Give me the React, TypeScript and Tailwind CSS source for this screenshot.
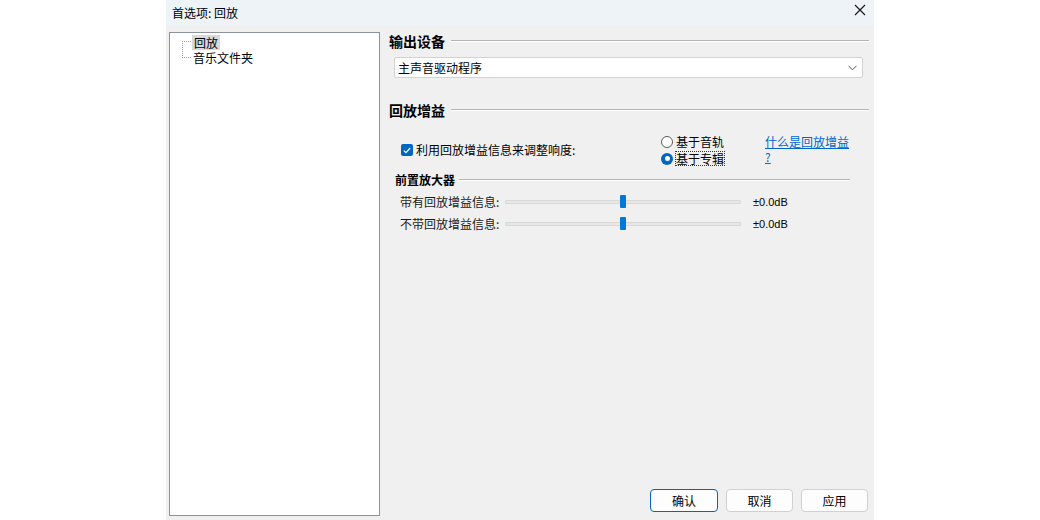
import React from "react";

// ─── Preferences dialog: playback page ───────────────────

const font = { fontFamily: '"Noto Sans CJK SC", "Noto Sans", sans-serif' };

function SectionHeader({ title, className = "" }: { title: string; className?: string }) {
    return (
        <div className={`flex h-[20px] items-center ${className}`}>
            <span className="text-[14px] font-bold leading-none text-black">{title}</span>
            <div className="ml-[6px] flex-1 border-t border-b border-t-[#b4b4b4] border-b-white" />
        </div>
    );
}

function Slider({ label }: { label: string }) {
    return (
        <div className="flex h-[20px] items-center pl-[11px]">
            <span className="w-[105px] text-[12px] leading-none text-[#1a1a1a]">{label}</span>
            <div className="relative flex h-[14px] w-[236px] items-center">
                <div className="h-[4px] w-full rounded-[1px] border border-[#d8d8d8] bg-[#e7e7e7]" />
                <div className="absolute left-[115px] top-0 h-[13px] w-[6px] rounded-[1px] bg-[#0078d7]" />
            </div>
            <span className="ml-[12px] text-[11px] leading-none text-black" style={{ fontFamily: '"Liberation Sans", sans-serif' }}>
                ±0.0dB
            </span>
        </div>
    );
}

function Radio({ checked }: { checked?: boolean }) {
    return checked ? (
        <span className="flex h-[12px] w-[12px] items-center justify-center rounded-full bg-[#0067c0]">
            <span className="h-[5px] w-[5px] rounded-full bg-white" />
        </span>
    ) : (
        <span className="h-[12px] w-[12px] rounded-full border border-[#5a5a5a] bg-white" />
    );
}

export default function App() {
    return (
        <div className="flex h-[520px] w-[1040px] bg-white" style={font}>
            <div className="ml-[166px] flex h-full w-[708px] flex-col bg-[#f0f0f0]">
                {/* Title bar */}
                <div className="flex h-[25px] items-center justify-between bg-[#eef3f8] pl-[6px] pr-[8px]">
                    <span className="text-[12px] leading-none text-black">首选项: 回放</span>
                    <svg width="12" height="12" viewBox="0 0 12 12" className="mt-[-6px]">
                        <path d="M1 1 L11 11 M11 1 L1 11" stroke="#1a1a1a" strokeWidth="1.2" />
                    </svg>
                </div>

                <div className="flex flex-1">
                    {/* Tree */}
                    <div className="ml-[3px] mt-[7px] h-[484px] w-[211px] border border-[#8d939b] bg-white">
                        <div className="relative pl-[22px] pt-[2px]">
                            <div className="absolute left-[12px] top-[8px] h-[17px] border-l border-dotted border-[#a0a0a0]" />
                            <div className="absolute left-[12px] top-[8px] w-[9px] border-t border-dotted border-[#a0a0a0]" />
                            <div className="absolute left-[12px] top-[24px] w-[9px] border-t border-dotted border-[#a0a0a0]" />
                            <div className="flex h-[15px] items-center">
                                <span className="bg-[#d9d9d9] px-[2px] text-[12px] leading-[15px] text-black">回放</span>
                            </div>
                            <div className="flex h-[16px] items-center pl-[1px] text-[12px] leading-none text-black">音乐文件夹</div>
                        </div>
                    </div>

                    {/* Right pane */}
                    <div className="ml-[9px] flex w-[480px] flex-col pb-[8px]">
                        <SectionHeader title="输出设备" className="mt-[6px]" />
                        <div className="ml-[5px] mt-[6px] flex h-[21px] w-[469px] items-center justify-between rounded-[2px] border border-[#d2d2d2] bg-white pl-[3px] pr-[5px]">
                            <span className="text-[12px] leading-none text-black">主声音驱动程序</span>
                            <svg width="9" height="6" viewBox="0 0 9 6">
                                <path d="M0.5 0.8 L4.5 4.8 L8.5 0.8" stroke="#555" strokeWidth="1" fill="none" />
                            </svg>
                        </div>

                        <SectionHeader title="回放增益" className="mt-[22px]" />

                        <div className="mt-[14px] flex h-[32px]">
                            <div className="ml-[12px] flex w-[260px] items-center gap-[3px]">
                                <span className="flex h-[12px] w-[12px] items-center justify-center rounded-[2px] bg-[#0067c0]">
                                    <svg width="8" height="7" viewBox="0 0 8 7">
                                        <path d="M0.8 3.6 L3 5.7 L7.2 1" stroke="white" strokeWidth="1.2" fill="none" />
                                    </svg>
                                </span>
                                <span className="text-[12px] leading-none text-black">利用回放增益信息来调整响度:</span>
                            </div>
                            <div className="flex w-[104px] flex-col">
                                <div className="flex h-[15px] items-center gap-[3px]">
                                    <Radio />
                                    <span className="text-[12px] leading-none text-black">基于音轨</span>
                                </div>
                                <div className="mt-[2px] flex h-[15px] items-center gap-[2px]">
                                    <Radio checked />
                                    <span className="border border-dotted border-[#333] text-[12px] leading-[13px] text-black">基于专辑</span>
                                </div>
                            </div>
                            <div className="flex flex-col text-[12px] leading-[15px] text-[#0066cc] underline">
                                <span>什么是回放增益</span>
                                <span>?</span>
                            </div>
                        </div>

                        <div className="ml-[6px] mr-[19px] mt-[6px] flex h-[16px] items-center">
                            <span className="text-[12px] font-bold leading-none text-black">前置放大器</span>
                            <div className="ml-[4px] flex-1 border-t border-b border-t-[#b4b4b4] border-b-white" />
                        </div>

                        <div className="mt-[4px]">
                            <Slider label="带有回放增益信息:" />
                        </div>
                        <div className="mt-[2px]">
                            <Slider label="不带回放增益信息:" />
                        </div>

                        {/* Buttons */}
                        <div className="mt-auto flex justify-end gap-[8px] pr-[1px]">
                            <button className="h-[23px] w-[68px] rounded-[4px] border border-[#0067c0] bg-[#fdfdfd] text-[12px] text-black">确认</button>
                            <button className="h-[23px] w-[67px] rounded-[4px] border border-[#d0d0d0] bg-[#fdfdfd] text-[12px] text-black">取消</button>
                            <button className="h-[23px] w-[67px] rounded-[4px] border border-[#d0d0d0] bg-[#fdfdfd] text-[12px] text-black">应用</button>
                        </div>
                    </div>
                </div>
            </div>
        </div>
    );
}
